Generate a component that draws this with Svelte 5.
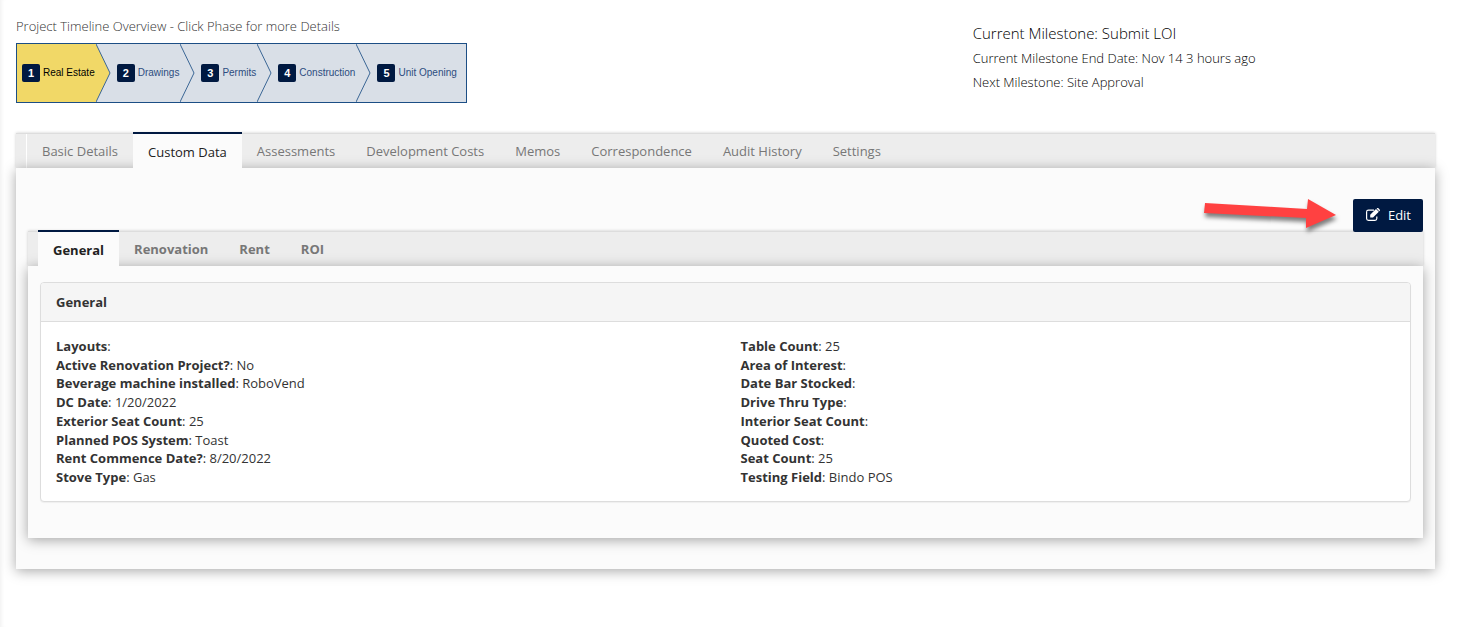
<script lang="ts">
	type Field = { label: string; value: string };

	const phases = ['Real Estate', 'Drawings', 'Permits', 'Construction', 'Unit Opening'];

	const tabs = [
		'Basic Details',
		'Custom Data',
		'Assessments',
		'Development Costs',
		'Memos',
		'Correspondence',
		'Audit History',
		'Settings'
	];
	const subTabs = ['General', 'Renovation', 'Rent', 'ROI'];

	const columns: Field[][] = [
		[
			{ label: 'Layouts', value: '' },
			{ label: 'Active Renovation Project?', value: 'No' },
			{ label: 'Beverage machine installed', value: 'RoboVend' },
			{ label: 'DC Date', value: '1/20/2022' },
			{ label: 'Exterior Seat Count', value: '25' },
			{ label: 'Planned POS System', value: 'Toast' },
			{ label: 'Rent Commence Date?', value: '8/20/2022' },
			{ label: 'Stove Type', value: 'Gas' }
		],
		[
			{ label: 'Table Count', value: '25' },
			{ label: 'Area of Interest', value: '' },
			{ label: 'Date Bar Stocked', value: '' },
			{ label: 'Drive Thru Type', value: '' },
			{ label: 'Interior Seat Count', value: '' },
			{ label: 'Quoted Cost', value: '' },
			{ label: 'Seat Count', value: '25' },
			{ label: 'Testing Field', value: 'Bindo POS' }
		]
	];

	let phase = $state(0);
	let tab = $state('Custom Data');
	let subTab = $state('General');
</script>

<main class="page">
	<header class="overview">
		<section>
			<h1 class="overview__title">Project Timeline Overview - Click Phase for more Details</h1>
			<div class="timeline">
				{#each phases as name, i}
					<button type="button" class="phase" class:phase--active={phase === i} onclick={() => (phase = i)}>
						{#if i > 0}
							<svg class="phase__arrow" class:phase__arrow--active={phase === i - 1} viewBox="0 0 15 58" aria-hidden="true">
								<polygon points="0,0 14,29 0,58" />
								<polyline points="0,0 14,29 0,58" />
							</svg>
						{/if}
						<span class="phase__number">{i + 1}</span>
						<span class="phase__name">{name}</span>
					</button>
				{/each}
			</div>
		</section>
		<section class="milestones">
			<p class="milestones__current">Current Milestone: Submit LOI</p>
			<p>Current Milestone End Date: Nov 14 3 hours ago</p>
			<p>Next Milestone: Site Approval</p>
		</section>
	</header>

	<div class="tabset">
		<nav class="tabs tabs--main">
			{#each tabs as name}
				<button type="button" class="tab" class:tab--active={tab === name} onclick={() => (tab = name)}>{name}</button>
			{/each}
		</nav>
		<div class="content content--main">
			<div class="actions">
				<svg class="pointer" viewBox="0 0 150 48" aria-hidden="true">
					<polygon points="7,10 109,16 110,6 138,22 108,35 108,25 6,20" />
				</svg>
				<button type="button" class="edit">
					<svg viewBox="0 0 16 14" width="16" height="14" aria-hidden="true">
						<path
							d="M9 2.2H3.5Q1.6 2.2 1.6 4V10.5Q1.6 12.3 3.5 12.3H10Q11.8 12.3 11.8 10.5V8.6"
							fill="none"
							stroke="currentColor"
							stroke-width="1.2"
						/>
						<path d="M5.2 6.8 11 1 13.8 3.8 8 9.6H5.2Z M11.6 .6 12.1 .1Q12.7-.3 13.2 .1L14.8 1.7Q15.2 2.2 14.8 2.7L14.2 3.2Z" fill="currentColor" />
					</svg>
					Edit
				</button>
			</div>

			<div class="tabset">
				<nav class="tabs tabs--bold">
					{#each subTabs as name}
						<button type="button" class="tab" class:tab--active={subTab === name} onclick={() => (subTab = name)}>{name}</button>
					{/each}
				</nav>
				<div class="content content--sub">
					<section class="panel">
						<h2 class="panel__heading">General</h2>
						<div class="panel__body">
							{#each columns as fields}
								<ul class="fields">
									{#each fields as field}
										<li><strong>{field.label}</strong>: {field.value}</li>
									{/each}
								</ul>
							{/each}
						</div>
					</section>
				</div>
			</div>
		</div>
	</div>
</main>

<style>
	:global(body) {
		background: #fff;
		color: #333;
		font: 13px/18px 'Open Sans', sans-serif;
	}
	:global(html) {
		min-height: 100%;
		box-shadow: inset 4px 0 4px -3px #eee;
	}
	button {
		font: inherit;
		border: 0;
		margin: 0;
		cursor: pointer;
	}
	h1,
	h2,
	p,
	ul {
		margin: 0;
		padding: 0;
		list-style: none;
	}
	.page {
		padding: 17px 25px 58px 16px;
	}

	.overview {
		display: grid;
		grid-template-columns: 2fr 1fr;
		margin-right: -16px;
		margin-bottom: 30px;
	}
	.overview__title {
		margin-bottom: 8px;
		font-size: 13px;
		font-weight: 300;
	}
	.timeline {
		display: inline-flex;
		height: 58px;
		border: 1px solid #1c4e85;
		vertical-align: top;
	}
	.phase {
		display: flex;
		align-items: center;
		padding: 0;
		background: #d9dfe7;
		color: #2d4d80;
		font: 10px/18px 'Liberation Sans', Arial, sans-serif;
	}
	.phase:first-child {
		padding-left: 5px;
	}
	.phase:last-child {
		padding-right: 8px;
	}
	.phase--active {
		background: #f1d867;
		color: #000;
	}
	.phase__arrow {
		width: 15px;
		height: 58px;
		margin-right: 6px;
		fill: #d9dfe7;
	}
	.phase__arrow--active {
		fill: #f1d867;
	}
	.phase__arrow polyline {
		fill: none;
		stroke: #3b6695;
	}
	.phase__number {
		width: 18px;
		height: 18px;
		margin-right: 3px;
		border-radius: 2px;
		background: #001941;
		color: #fff;
		font-size: 11px;
		font-weight: 700;
		text-align: center;
	}
	.phase__name {
		padding-right: 1px;
	}
	.milestones {
		padding-top: 7px;
		color: #000;
		font-weight: 300;
	}
	.milestones p {
		margin-bottom: 6px;
	}
	.milestones .milestones__current {
		margin-bottom: 7px;
		font-size: 15px;
	}

	.tabs {
		display: flex;
		gap: 1px;
		height: 34px;
		padding-left: 10px;
		border-top: 1px solid #ddd;
		background: #ededed;
		box-shadow: 0 0 3px rgba(0, 0, 0, 0.2);
	}
	.tabs--main::before {
		content: '';
		width: 1px;
		margin-right: -1px;
		background: #fff;
	}
	.tab {
		padding: 0 15px;
		background: none;
		color: #777;
	}
	.tabs--bold .tab {
		font-weight: 700;
	}
	/* the selected tab rises over the bar and covers the shadow of its content */
	.tab--active {
		position: relative;
		z-index: 1;
		margin-top: -2px;
		margin-right: -1px;
		padding-top: 2px;
		border-top: 2px solid #001941;
		background: #fbfbfb;
		color: #222;
	}
	.tab + .tab--active {
		margin-left: -1px;
	}
	.content {
		position: relative;
		background: #fbfbfb;
		box-shadow: 0 2px 12px rgba(0, 0, 0, 0.35);
	}
	.content--main {
		padding: 31px 12px;
	}
	.content--sub {
		padding: 16px 12px 36px;
	}

	.actions {
		display: flex;
		justify-content: flex-end;
		position: relative;
		z-index: 1;
		margin-bottom: -1px;
	}
	.edit {
		display: flex;
		align-items: center;
		gap: 7px;
		height: 33px;
		padding: 0 12px 1px;
		border-radius: 2px;
		background: #001941;
		color: #fff;
	}
	.pointer {
		position: absolute;
		top: -6px;
		right: 75px;
		width: 150px;
		height: 48px;
		fill: #ff4141;
		filter: drop-shadow(1px 4px 2px rgba(0, 0, 0, 0.5));
	}

	.panel {
		border: 1px solid #ddd;
		border-radius: 4px;
		background: #fff;
		box-shadow: 0 1px 1px rgba(0, 0, 0, 0.05);
	}
	.panel__heading {
		padding: 10px 15px;
		border-bottom: 1px solid #ddd;
		border-radius: 3px 3px 0 0;
		background: #f5f5f5;
		font-size: 13px;
		font-weight: 700;
	}
	.panel__body {
		display: grid;
		grid-template-columns: 1fr 1fr;
		padding: 15px 0;
	}
	.fields {
		display: flex;
		flex-direction: column;
		justify-content: space-between;
		min-height: 149px;
		padding: 0 15px;
	}
</style>
